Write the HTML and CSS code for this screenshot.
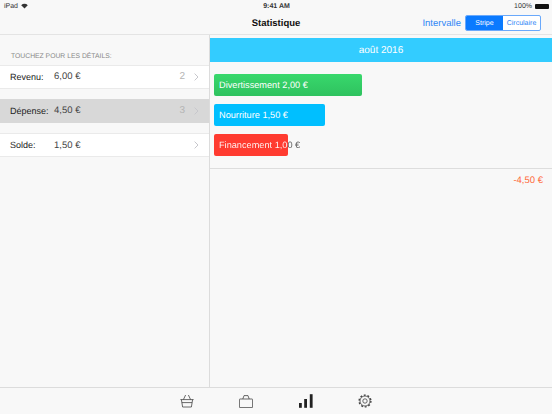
FILE: index.html
```html
<!DOCTYPE html>
<html lang="fr">
<head>
    <meta charset="UTF-8">
    <title>Statistique</title>
    <link rel="stylesheet" href="styles.css">
</head>
<body>
<div class="app">
    <!-- status bar -->
    <div class="status">
        <div class="status-left">
            <span>iPad</span>
            <svg width="7" height="6" viewBox="0 0 10 8"><path d="M5 7.6 0.3 2.8C3 0.3 7 0.3 9.7 2.8Z" fill="#333"/></svg>
        </div>
        <div class="status-time">9:41 AM</div>
        <div class="status-right">
            <span>100%</span>
            <span class="battery"></span>
        </div>
    </div>

    <!-- nav bar -->
    <div class="nav">
        <div class="nav-title">Statistique</div>
        <div class="nav-actions">
            <span class="nav-link">Intervalle</span>
            <div class="segment">
                <span class="seg seg-on">Stripe</span>
                <span class="seg">Circulaire</span>
            </div>
        </div>
    </div>

    <div class="main">
        <div class="side">
            <div class="side-head">TOUCHEZ POUR LES DÉTAILS:</div>
            <div class="row">
                <span class="row-label">Revenu:</span>
                <span class="row-value">6,00 €</span>
                <span class="row-count">2</span>
                <svg class="chev" width="5" height="8" viewBox="0 0 5 8"><path d="M.6.6l3.4 3.4L.6 7.4" fill="none" stroke="#c7c7cc" stroke-width="1"/></svg>
            </div>
            <div class="row row-selected">
                <span class="row-label">Dépense:</span>
                <span class="row-value">4,50 €</span>
                <span class="row-count">3</span>
                <svg class="chev" width="5" height="8" viewBox="0 0 5 8"><path d="M.6.6l3.4 3.4L.6 7.4" fill="none" stroke="#c7c7cc" stroke-width="1"/></svg>
            </div>
            <div class="row">
                <span class="row-label">Solde:</span>
                <span class="row-value">1,50 €</span>
                <span class="row-count"></span>
                <svg class="chev" width="5" height="8" viewBox="0 0 5 8"><path d="M.6.6l3.4 3.4L.6 7.4" fill="none" stroke="#c7c7cc" stroke-width="1"/></svg>
            </div>
        </div>

        <div class="detail">
            <div class="month">août 2016</div>
            <div class="bars">
                <div class="bar bar-green" style="width:148px"><span>Divertissement 2,00 €</span></div>
                <div class="bar bar-blue" style="width:111px"><span>Nourriture 1,50 €</span></div>
                <div class="bar bar-red" style="width:74px"><span class="bar-over">Financement 1,00 €</span></div>
            </div>
            <div class="total">-4,50 €</div>
        </div>
    </div>

    <!-- tab bar -->
    <div class="tabs">
        <svg width="14" height="14" viewBox="0 0 14 14" fill="none" stroke="#444" stroke-width="0.8"><path d="M.4 5.6h13.2M1.4 5.6l1.2 7.4h8.8l1.2-7.4M3.4 5.6l2.2-4.6M10.6 5.600L8.400 1M1.900 8.600h10.200"/></svg>
        <svg width="14" height="13" viewBox="0 0 14 13" fill="none" stroke="#444" stroke-width="0.8"><path d="M1 4h12a.6.6 0 0 1 .6.6v7.400a.6.6 0 0 1-.6.6H1a.6.6 0 0 1-.6-.6V4.600a.6.6 0 0 1 .6-.6ZM3.800 4l1.200-3.400h4l1.200 3.400"/></svg>
        <svg width="14" height="14" viewBox="0 0 14 14" fill="#222"><rect x="0" y="9" width="2.800" height="4.800"/><rect x="5.200" y="5" width="2.800" height="8.800"/><rect x="10.800" y="0.200" width="2.800" height="13.600"/></svg>
        <svg width="14" height="14" viewBox="0 0 14 14" fill="none" stroke="#444"><circle cx="7" cy="7" r="2.200" stroke-width="0.8"/><circle cx="7" cy="7" r="5" stroke-width="0.8"/><circle cx="7" cy="7" r="5.900" stroke-width="1.400" stroke-dasharray="1.900 1.800"/></svg>
    </div>
</div>
</body>
</html>
```
FILE: styles.css
```css
* {
    box-sizing: border-box;
}

html, body {
    margin: 0;
    padding: 0;
}

body {
    font-family: "Liberation Sans", Arial, sans-serif;
    text-rendering: geometricPrecision;
    background: #f8f8f8;
    color: #222;
}

.app {
    width: 552px;
    height: 414px;
    display: flex;
    flex-direction: column;
    overflow: hidden;
}

/* status + nav */
.status {
    height: 12px;
    padding: 0 3px 0 4px;
    display: grid;
    grid-template-columns: 1fr auto 1fr;
    align-items: center;
    font-size: 7px;
    color: #333;
}

.status-left, .status-right {
    display: flex;
    align-items: center;
    gap: 3px;
}

.status-right {
    justify-content: flex-end;
}

.status-time {
    font-size: 7px;
    font-weight: bold;
}

.battery {
    width: 14px;
    height: 5px;
    background: #111;
    border-radius: 1px;
}

.nav {
    height: 22px;
    position: relative;
    display: flex;
    align-items: center;
    justify-content: flex-end;
    padding-right: 11px;
}

.nav-title {
    position: absolute;
    left: 0;
    right: 0;
    text-align: center;
    font-size: 9.5px;
    font-weight: bold;
    color: #111;
}

.nav-actions {
    display: flex;
    align-items: center;
    gap: 4px;
    position: relative;
}

.nav-link {
    color: #2f86f6;
    font-size: 9.5px;
}

.segment {
    display: flex;
    width: 76px;
    height: 16px;
    border: 1px solid #6aa9fb;
    border-radius: 2px;
    background: #fff;
    overflow: hidden;
}

.seg {
    flex: 1;
    font-size: 7px;
    line-height: 15px;
    text-align: center;
    color: #2f86f6;
}

.seg-on {
    background: #0a7aff;
    color: #fff;
}

.main {
    flex: 1;
    display: flex;
    border-top: 1px solid #e4e4e4;
    min-height: 0;
}

/* left list */
.side {
    width: 210px;
    border-right: 1px solid #dcdcdc;
}

.side-head {
    font-size: 6.8px;
    color: #888;
    padding: 18px 0 0 11px;
    height: 29.7px;
}

.row {
    height: 24px;
    background: #fff;
    border-top: 1px solid #eaeaea;
    border-bottom: 1px solid #eaeaea;
    display: flex;
    align-items: center;
    padding-left: 10px;
    font-size: 9.5px;
    margin-bottom: 10.3px;
}

.row-selected {
    background: #d8d8d8;
    border-color: #d8d8d8;
}

.row-label {
    width: 44px;
    font-size: 9px;
    color: #222;
}

.row-value {
    flex: 1;
    color: #444;
}

.row-count {
    color: #b4b4b4;
    font-size: 10px;
    margin-right: 9px;
}

.chev {
    margin-right: 10px;
}

/* right detail */
.detail {
    flex: 1;
    padding-top: 3px;
}

.month {
    height: 24px;
    line-height: 26px;
    background: #33ccff;
    color: #fff;
    text-align: center;
    font-size: 10px;
}

.bars {
    display: flex;
    flex-direction: column;
    gap: 8px;
    padding: 12px 4px;
    border-bottom: 1px solid #ddd;
}

.bar {
    height: 22px;
    border-radius: 2px;
    color: #fff;
    font-size: 9.2px;
    line-height: 22px;
    padding-left: 5px;
    white-space: nowrap;
}

/* label runs past the bar, white on the bar and dark after it */
.bar-over {
    background: linear-gradient(90deg, #fff 69px, #555 69px);
    -webkit-background-clip: text;
    background-clip: text;
    color: transparent;
}

.bar-green {
    background: linear-gradient(#38d86c, #2fc25f);
}

.bar-blue {
    background: #00bfff;
}

.bar-red {
    background: #ff3b30;
}

.total {
    text-align: right;
    color: #ff6a3c;
    font-size: 9.5px;
    padding: 6px 9px 0 0;
}

/* tab bar */
.tabs {
    height: 27px;
    border-top: 1px solid #dcdcdc;
    display: flex;
    align-items: center;
    justify-content: center;
    gap: 45.3px;
}
```
